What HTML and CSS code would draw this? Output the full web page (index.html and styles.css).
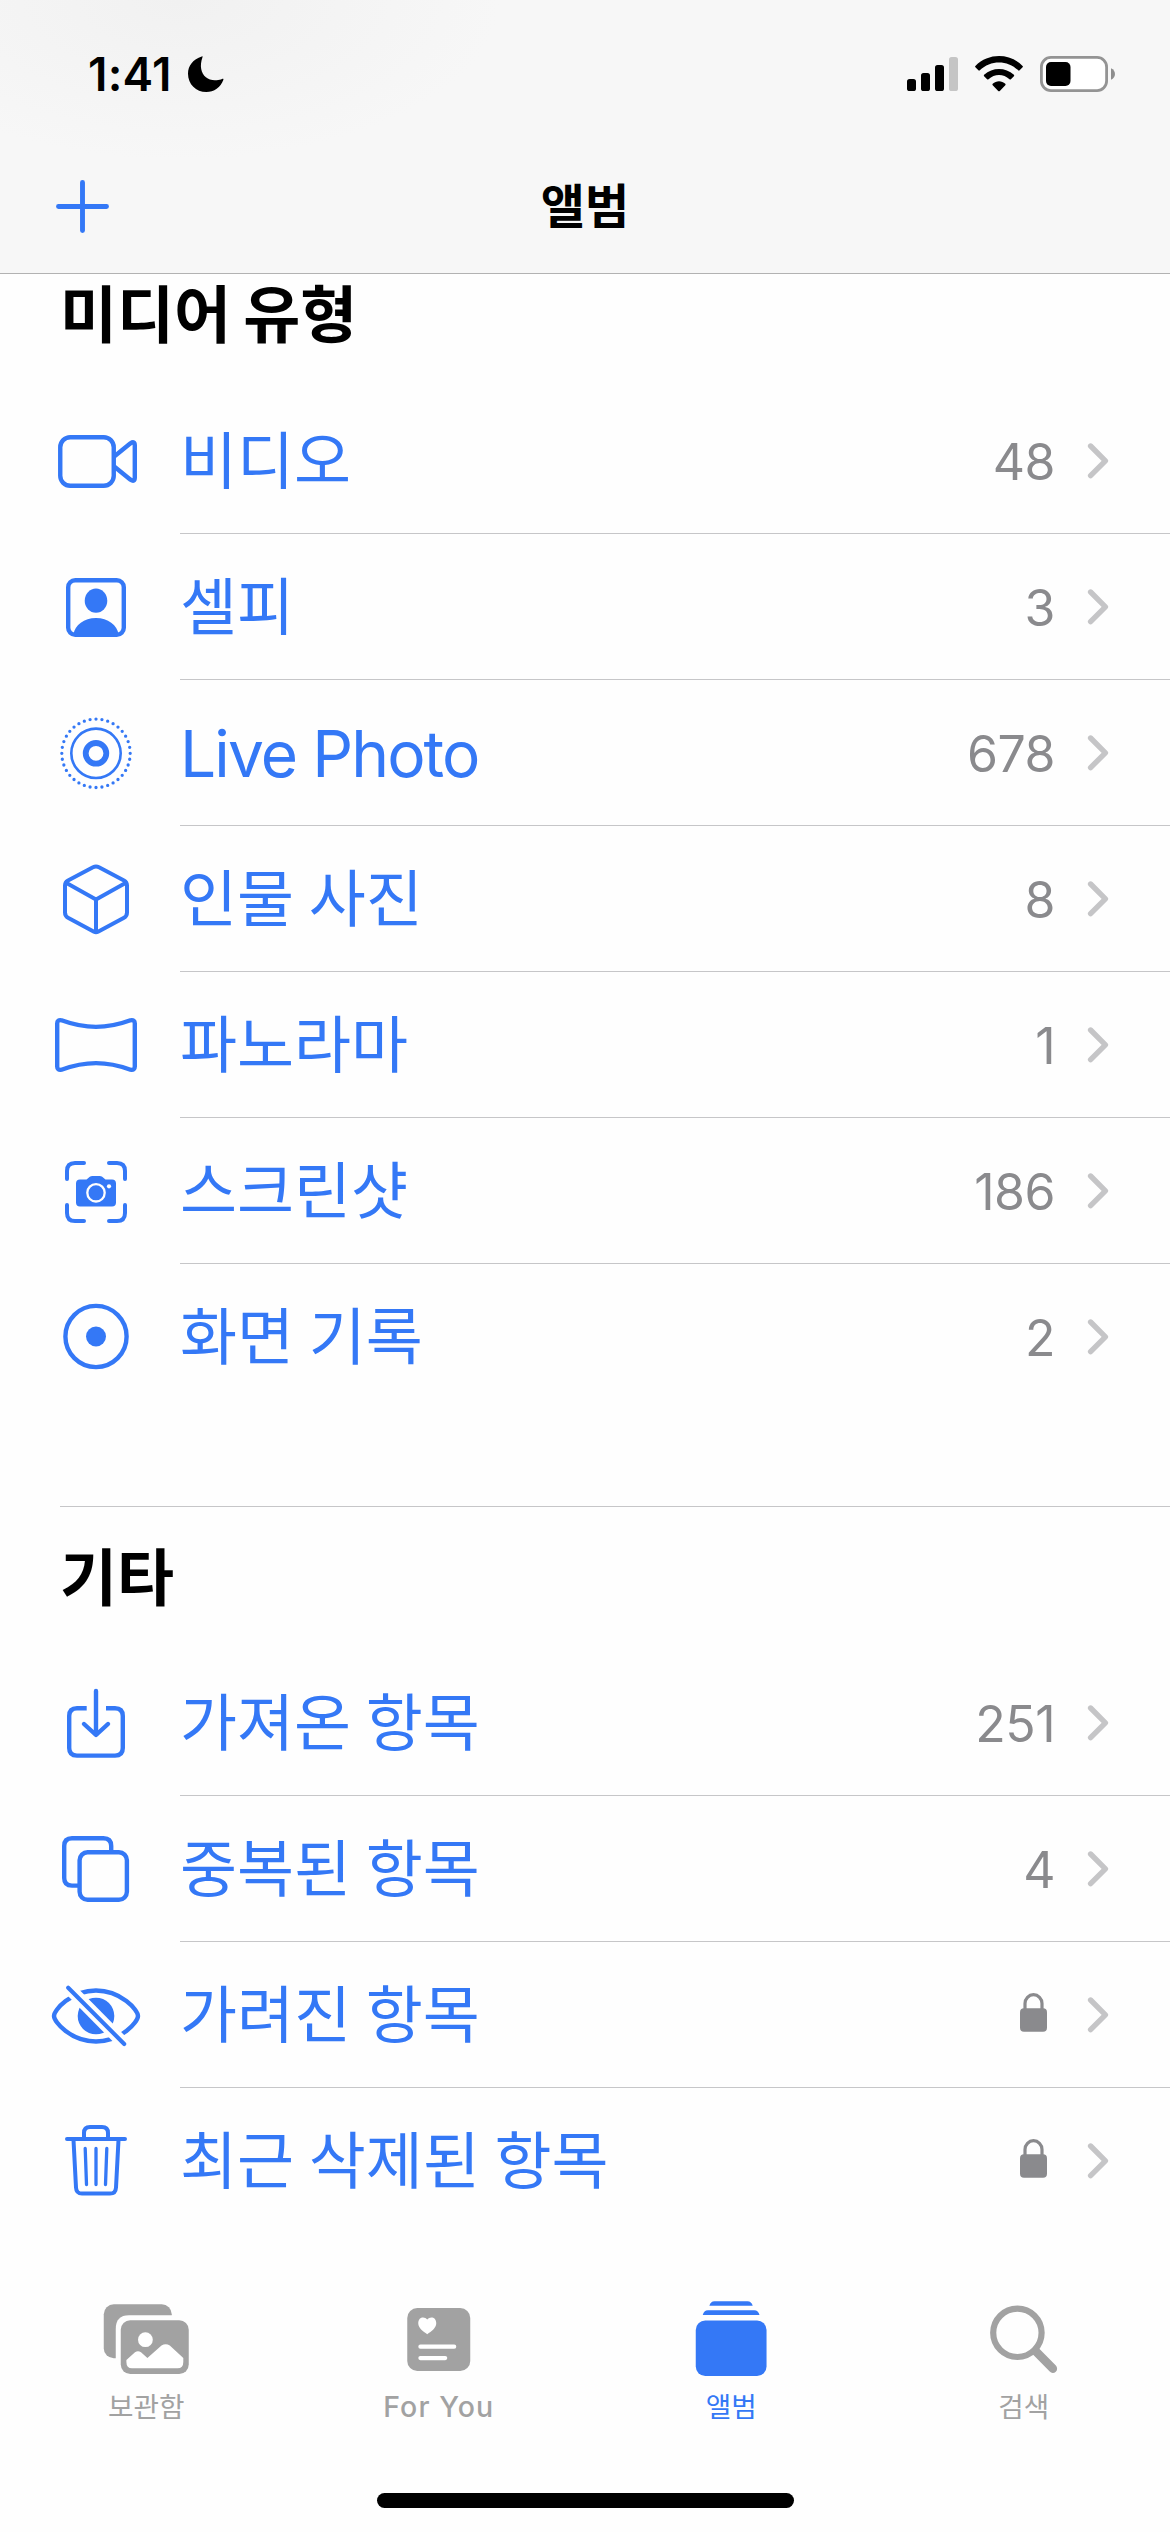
FILE: index.html
```html
<!DOCTYPE html>
<html lang="ko">
<head>
<meta charset="utf-8">
<title>앨범</title>
<link rel="stylesheet" href="styles.css">
</head>
<body>
<svg class="defs" width="0" height="0">
  <symbol id="chevron" viewBox="0 0 22 38"><path d="M3.6 4 18.4 18.8 3.6 33.6" fill="none" stroke="currentColor" stroke-width="5.4" stroke-linecap="round" stroke-linejoin="round"/></symbol>
  <symbol id="lock" viewBox="0 0 27 39"><rect y="15.3" width="27" height="23.4" rx="4" fill="currentColor"/><path d="M5 17V10.5a8.5 8.8 0 0 1 17 0V17" fill="none" stroke="currentColor" stroke-width="3.2"/></symbol>
</svg>

<header class="header">
  <div class="status">
    <div class="status-left">
      <span class="time">1:41</span>
      <svg class="moon" width="36" height="36" viewBox="0 0 36 36"><path d="M13.8.6C14.6 0 14.7.6 14.4 1.6 13 5.6 12.6 9.6 13.2 13 14.6 20.6 21 25 28.6 24.2 31 24 32.6 23.500 34 22.900 35.200 22.500 35.700 22.900 35.300 24 32.700 31.300 26 36 18.300 36 8 36 0 28.200 0 17.700 0 10 5 3.400 13.800.6Z"/></svg>
    </div>
    <div class="status-right">
      <svg width="51" height="36" viewBox="0 0 51 36"><rect y="23" width="9" height="12" rx="2.600"/><rect x="14" y="17" width="9" height="18" rx="2.600"/><rect x="28" y="9" width="9" height="26" rx="2.600"/><rect x="42" y="1" width="9" height="34" rx="2.600" fill="#c5c5c5"/></svg>
      <svg width="48" height="36" viewBox="0 0 48 36"><path d="M.4 11.300a1 1 0 0 1 0-1.400C13.500-3.200 34.500-3.200 47.600 9.900a1 1 0 0 1 0 1.400L44.600 14.300a1 1 0 0 1-1.400 0C32.500 3.800 15.500 3.800 4.800 14.300a1 1 0 0 1-1.400 0Z"/><path d="M9.100 20.200a1 1 0 0 1 0-1.400C17.500 10.900 30.500 10.900 38.900 18.800a1 1 0 0 1 0 1.400L35.900 23.200a1 1 0 0 1-1.400 0C28.500 17.500 19.500 17.500 13.500 23.200a1 1 0 0 1-1.400 0Z"/><path d="M17.700 27.700C21.200 24.300 26.800 24.300 30.300 27.700Q31 28.500 30.300 29.200L24.800 34.900Q24 35.700 23.200 34.900L17.700 29.200Q17 28.500 17.700 27.700Z"/></svg>
      <svg width="76" height="36" viewBox="0 0 76 36"><rect x="1.400" y="1.400" width="65.200" height="33.200" rx="9.500" fill="#fff" stroke="#949494" stroke-width="2.800"/><rect x="6" y="6" width="24.500" height="24" rx="5"/><path d="M71 12.300c5.300 2.300 5.300 9.100 0 11.400Z" fill="#8e8e8e"/></svg>
    </div>
  </div>
  <div class="navbar">
    <svg class="add" width="53" height="53" viewBox="0 0 53 53"><path d="M26.500 2.500v48M2.500 26.500h48" stroke="currentColor" stroke-width="4.900" stroke-linecap="round"/></svg>
    <h1 class="title">앨범</h1>
    <span></span>
  </div>
</header>

<main class="content">
  <section class="section">
    <h2 class="heading">미디어 유형</h2>
    <ul class="list">
      <li class="row">
        <svg class="icon" viewBox="0 0 90 91"><rect x="9.250" y="22.250" width="53.500" height="48.500" rx="10"/><path d="M63.500 41.200 79.500 28.300Q83.800 25.500 83.800 30.500V62.500Q83.800 67.500 79.500 64.700L63.500 51.800"/></svg>
        <div class="cell"><span class="label">비디오</span><span class="count">48</span><svg class="chevron"><use href="#chevron"/></svg></div>
      </li>
      <li class="row">
        <svg class="icon" viewBox="0 0 90 91"><rect x="17.200" y="19.200" width="55.600" height="54.600" rx="7"/><g class="solid"><ellipse cx="45" cy="39.700" rx="11.300" ry="12.100"/><path d="M22.500 73C24 64 33 57 45 57S66 64 67.500 73Z"/></g></svg>
        <div class="cell"><span class="label">셀피</span><span class="count">3</span><svg class="chevron"><use href="#chevron"/></svg></div>
      </li>
      <li class="row">
        <svg class="icon" viewBox="0 0 90 91"><circle cx="45" cy="46.300" r="34.200" stroke-width="3.300" pathLength="360" stroke-dasharray="0 10" transform="rotate(-90 45 46.300)"/><circle cx="45" cy="46.300" r="24.700" stroke-width="2.600"/><circle cx="45" cy="46.300" r="10.300" stroke-width="5.800"/></svg>
        <div class="cell"><span class="label latin">Live Photo</span><span class="count">678</span><svg class="chevron"><use href="#chevron"/></svg></div>
      </li>
      <li class="row">
        <svg class="icon thin" viewBox="0 0 90 91"><path d="M42 14.300Q45 12.800 48 14.300L73 27.500Q76 29.200 76 32.500V59.500Q76 63 73 64.700L47 78.700Q45 79.800 43 78.700L17 64.700Q14 63 14 59.500V32.500Q14 29.200 17 27.500ZM15.500 30 45 46.500 74.500 30M45 46.500V78.500"/></svg>
        <div class="cell"><span class="label">인물 사진</span><span class="count">8</span><svg class="chevron"><use href="#chevron"/></svg></div>
      </li>
      <li class="row">
        <svg class="icon" viewBox="0 0 90 91"><path d="M6.200 24.500Q6.200 20.500 10.500 21.300C22 25.500 32 27.900 45 27.900S68 25.500 79.500 21.300Q83.800 20.500 83.800 24.500V67.500Q83.800 71.500 79.500 70.700C68 66.500 58 64.100 45 64.100S22 66.500 10.500 70.700Q6.200 71.500 6.200 67.500Z"/></svg>
        <div class="cell"><span class="label">파노라마</span><span class="count">1</span><svg class="chevron"><use href="#chevron"/></svg></div>
      </li>
      <li class="row">
        <svg class="icon thin" viewBox="0 0 90 91"><path d="M16 34V26Q16 18 24 18H33M58 18H66Q74 18 74 26V34M74 60V68Q74 76 66 76H58M33 76H24Q16 76 16 68V60"/><g class="solid"><path d="M29 34.500H35.500L38.800 31.800Q39.800 31 41.500 31H48.500Q50.200 31 51.200 31.800L54.500 34.500H61Q65 34.500 65 38.500V57.500Q65 61.500 61 61.500H29Q25 61.500 25 57.500V38.500Q25 34.500 29 34.500Z"/></g><circle class="hole" cx="45" cy="47.800" r="8.700" stroke-width="2.300"/><circle cx="58" cy="41.300" r="2.100" fill="#fff" stroke="none"/></svg>
        <div class="cell"><span class="label">스크린샷</span><span class="count">186</span><svg class="chevron"><use href="#chevron"/></svg></div>
      </li>
      <li class="row last">
        <svg class="icon" viewBox="0 0 90 91"><circle cx="45" cy="45.500" r="30.600"/><circle class="solid" cx="45" cy="45.500" r="10"/></svg>
        <div class="cell"><span class="label">화면 기록</span><span class="count">2</span><svg class="chevron"><use href="#chevron"/></svg></div>
      </li>
    </ul>
  </section>

  <section class="section other">
    <h2 class="heading">기타</h2>
    <ul class="list">
      <li class="row">
        <svg class="icon" viewBox="0 0 90 91"><path stroke-linecap="butt" d="M35.700 31.200H26Q18.200 31.200 18.200 39V71Q18.200 78.600 26 78.600H64Q71.800 78.600 71.800 71V39Q71.800 31.200 64 31.200H55"/><path d="M45 14V57.500M33 47 45 58 57 47"/></svg>
        <div class="cell"><span class="label">가져온 항목</span><span class="count">251</span><svg class="chevron"><use href="#chevron"/></svg></div>
      </li>
      <li class="row">
        <svg class="icon" viewBox="0 0 90 91"><path stroke-linecap="butt" d="M60.200 28V23Q60.200 15.200 52.500 15.200H21Q13.200 15.200 13.200 23V55Q13.200 62.600 21 62.600H27"/><rect x="28.600" y="29.300" width="47.300" height="47.500" rx="8"/></svg>
        <div class="cell"><span class="label">중복된 항목</span><span class="count">4</span><svg class="chevron"><use href="#chevron"/></svg></div>
      </li>
      <li class="row">
        <svg class="icon" viewBox="0 0 90 91"><path d="M3 47C3 41 20 21.500 45 21.500S87 41 87 47 70 72.500 45 72.500 3 53 3 47Z"/><circle class="solid" cx="45" cy="47" r="18.300"/><path d="M14 15.200 76 77.800" class="hole" stroke-width="12.500" stroke-linecap="butt"/><path d="M17.200 18.700 73.200 75" stroke-width="4.100"/></svg>
        <div class="cell"><span class="label">가려진 항목</span><svg class="lock"><use href="#lock"/></svg><svg class="chevron"><use href="#chevron"/></svg></div>
      </li>
      <li class="row last">
        <svg class="icon thin" viewBox="0 0 90 91"><path d="M16 24H74M33 23V18Q33 12 39 12H51Q57 12 57 18V23M22.500 25 25 72.500Q25.300 78.600 31 78.600H59Q64.700 78.600 65 72.500L67.500 25"/><path stroke-width="3.300" d="M34.200 33.500 35.500 69.500M45 33.500V69.500M55.800 33.500 54.500 69.500"/></svg>
        <div class="cell"><span class="label">최근 삭제된 항목</span><svg class="lock"><use href="#lock"/></svg><svg class="chevron"><use href="#chevron"/></svg></div>
      </li>
    </ul>
  </section>
</main>

<nav class="tabs">
  <a class="tab"><svg width="100" height="80" viewBox="0 0 100 80"><rect x="7.750" y="4.300" width="68" height="54" rx="10"/><path fill="#fefefe" d="M19.750 80V29Q19.750 15.300 33 15.300H100V80Z"/><rect x="24.750" y="20.300" width="68" height="53.700" rx="9.500"/><circle cx="49.400" cy="39.700" r="7.400" fill="#fff"/><path fill="#fff" d="M30.400 60 39 52.300Q42 50 45 52.300L51.400 57.900 65.500 45.600Q69.700 42.700 73.800 45.600L87.300 58V62Q87.300 68.300 81.500 68.300H36Q30.400 68.300 30.400 62Z"/></svg><span>보관함</span></a>
  <a class="tab"><svg width="100" height="80" viewBox="0 0 100 80"><rect x="18.250" y="8" width="63" height="63" rx="10"/><path fill="#fff" d="M38.250 19.600C36 16.300 29.250 16.400 29.250 23.300 29.250 28 34 31.500 38.250 34.200 42.500 31.500 47.250 28 47.250 23.300 47.250 16.400 40.500 16.300 38.250 19.600Z"/><path d="M31.400 46.700H65.200M31.400 58.100H56.200" stroke="#fff" stroke-width="4.200" stroke-linecap="round"/></svg><span class="latin">For You</span></a>
  <a class="tab active"><svg width="100" height="80" viewBox="0 0 100 80"><path d="M28.400 5.800Q29.500 1.200 33.500 1.200H66.500Q70.500 1.200 71.700 5.800ZM21.750 15Q22.800 10.200 27 10.200H73.200Q77.400 10.200 78.500 15Z"/><rect x="14.750" y="20.500" width="70.800" height="55.500" rx="9.500"/></svg><span>앨범</span></a>
  <a class="tab"><svg width="100" height="80" viewBox="0 0 100 80"><circle cx="43.400" cy="32.800" r="24.200" fill="none" stroke="currentColor" stroke-width="6.200"/><path d="M61.500 51 78.800 68.600" stroke="currentColor" stroke-width="8.600" stroke-linecap="round"/></svg><span>검색</span></a>
</nav>
<div class="home"></div>
</body>
</html>
```
FILE: styles.css
```css
* { box-sizing: border-box; }
html, body { margin: 0; }
body {
  width: 1170px;
  height: 2532px;
  display: flex;
  flex-direction: column;
  background: #fefefe;
  color: #000;
  font-family: "Inter", "Noto Sans CJK KR", sans-serif;
  overflow: hidden;
}
.defs { position: absolute; }
h1, h2, ul { margin: 0; padding: 0; font-weight: inherit; }
ul { list-style: none; }
svg { display: block; flex: none; }

.header {
  flex: none;
  height: 274px;
  background: radial-gradient(ellipse 320px 160px at 180px 0, #f1f1f1, #f7f7f7) #f7f7f7;
  border-bottom: 1px solid #b2b2b2;
}
.status {
  height: 148px;
  padding: 0 54px 0 88px;
  display: flex;
  justify-content: space-between;
  align-items: center;
}
.status-left, .status-right { display: flex; align-items: center; }
.status-left { gap: 16px; }
.status-right { gap: 17px; }
.time { font-size: 46px; font-weight: 600; line-height: 60px; letter-spacing: .2px; }
.navbar {
  height: 117px;
  padding: 0 56px;
  display: grid;
  grid-template-columns: 1fr auto 1fr;
  align-items: center;
}
.add { color: #3478f6; }
.title { font-size: 48px; font-weight: 700; line-height: 60px; }

.content { flex: 1; }
.heading {
  height: 114px;
  padding: 6px 0 0 60px;
  font-size: 62px;
  font-weight: 700;
  line-height: 72px;
  word-spacing: -2.500px;
}
.other {
  margin: 96px 0 0 60px;
  border-top: 1px solid #c6c6c8;
}
.other .heading { height: 143px; padding: 36px 0 0; }
.other .list { margin-left: -60px; }

.row {
  height: 146px;
  padding-left: 51px;
  display: flex;
  gap: 39px;
}
.icon {
  width: 90px;
  height: 91px;
  margin-top: 27px;
  color: #3478f6;
  fill: none;
  stroke: currentColor;
  stroke-width: 4.4;
  stroke-linecap: round;
  stroke-linejoin: round;
}
.thin { stroke-width: 4; }
.solid { fill: currentColor; stroke: none; }
.hole { stroke: #fefefe; }
.cell {
  flex: 1;
  display: flex;
  align-items: center;
  padding-right: 61px;
  border-bottom: 1px solid #c6c6c8;
}
.last .cell { border-color: transparent; }
.label {
  flex: 1;
  padding-top: 3px;
  color: #3478f6;
  font-size: 62px;
  line-height: 90px;
  word-spacing: -2.800px;
}
.label.latin { font-size: 64px; letter-spacing: -1.900px; word-spacing: 0; }
.count {
  padding-top: 2px;
  color: #8a8a8d;
  font-size: 50px;
  line-height: 60px;
  letter-spacing: -.500px;
}
.chevron { width: 22px; height: 38px; margin-left: 32px; color: #c5c5c7; }
.lock { width: 27px; height: 39px; margin: 0 8px 4px 0; color: #8a8a8d; }

.tabs {
  flex: none;
  height: 193px;
  display: grid;
  grid-template-columns: repeat(4, 1fr);
}
.tab {
  display: flex;
  flex-direction: column;
  align-items: center;
  color: #a2a2a2;
  fill: currentColor;
  font-size: 27.700px;
  line-height: 40px;
}
.tab span { margin-top: 7px; }
.tab .latin { font-size: 28.500px; font-weight: 500; letter-spacing: 1.100px; }
.active { color: #3478f6; }
.home {
  flex: none;
  width: 417px;
  height: 15px;
  margin: 0 0 24px 377px;
  border-radius: 8px;
  background: #000;
}
```
